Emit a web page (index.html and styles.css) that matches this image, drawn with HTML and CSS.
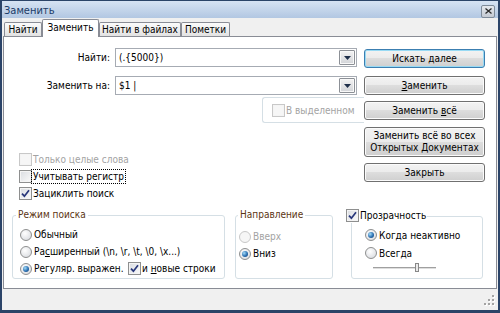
FILE: index.html
```html
<!DOCTYPE html>
<html lang="ru">
<head>
<meta charset="utf-8">
<title>Заменить</title>
<link rel="stylesheet" href="styles.css">
</head>
<body>
<div class="window">
  <div class="titlebar">
    <span class="title">Заменить</span>
    <span class="close"><svg width="7" height="6" viewBox="0 0 7 6"><path d="M0.5 0.5L6.5 5.5M6.5 0.5L0.5 5.5" stroke="#2a2a2a" stroke-width="1.3"/></svg></span>
  </div>
  <div class="body">
    <div class="tabs">
      <div class="tab t-find">Найти</div>
      <div class="tab t-replace active">Заменить</div>
      <div class="tab t-files">Найти в файлах</div>
      <div class="tab t-marks">Пометки</div>
    </div>
    <div class="panel">
      <div class="top">
        <div class="left">
          <div class="field">
            <span class="label">Найти:</span>
            <div class="combo"><span class="value">(.{5000})</span><span class="drop"><svg width="7" height="4" viewBox="0 0 7 4"><path d="M0 0H7L3.5 4Z" fill="#1f2f4a"/></svg></span></div>
          </div>
          <div class="field">
            <span class="label">Заменить на:</span>
            <div class="combo"><span class="value">$1 |</span><span class="drop"><svg width="7" height="4" viewBox="0 0 7 4"><path d="M0 0H7L3.5 4Z" fill="#1f2f4a"/></svg></span></div>
          </div>
          <div class="selbox">
            <div class="chk disabled"><span class="cb"></span><span class="txt">В выделенном</span></div>
          </div>
          <div class="checks">
            <div class="chk disabled"><span class="cb"></span><span class="txt">Только целые слова</span></div>
            <div class="chk"><span class="cb"></span><span class="txt focus">Учитывать регистр</span></div>
            <div class="chk"><span class="cb"><svg width="9" height="9" viewBox="0 0 9 9"><path d="M1 4.6L3.4 7.2L8 1.2" fill="none" stroke="#27367a" stroke-width="1.7"/></svg></span><span class="txt">Зациклить поиск</span></div>
          </div>
        </div>
        <div class="buttons">
          <div class="btn default">Искать далее</div>
          <div class="btn b2"><span><u>З</u>аменить</span></div>
          <div class="btn b3"><span>Заменить <u>в</u>сё</span></div>
          <div class="btn b4 tall"><span>Заменить всё во всех<br>Открытых Документах</span></div>
          <div class="btn b5">Закрыть</div>
        </div>
      </div>
      <div class="groups">
        <fieldset class="group g-mode">
          <legend>Режим поиска</legend>
          <div class="gbody">
            <div class="opt"><span class="rb"></span><span class="txt">Обычный</span></div>
            <div class="opt"><span class="rb"></span><span class="txt">Ра<u>с</u>ширенный (\n, \r, \t, \0, \x...)</span></div>
            <div class="opt">
              <span class="opt-main"><span class="rb on"></span><span class="txt">Регуляр. выражен.</span></span>
              <span class="cb"><svg width="9" height="9" viewBox="0 0 9 9"><path d="M1 4.6L3.4 7.2L8 1.2" fill="none" stroke="#27367a" stroke-width="1.7"/></svg></span><span class="txt">и <u>н</u>овые строки</span>
            </div>
          </div>
        </fieldset>
        <fieldset class="group g-dir">
          <legend>Направление</legend>
          <div class="gbody">
            <div class="opt disabled"><span class="rb"></span><span class="txt">Вверх</span></div>
            <div class="opt"><span class="rb on"></span><span class="txt">Вниз</span></div>
          </div>
        </fieldset>
        <fieldset class="group g-trans">
          <legend><span class="legend-chk"><span class="cb"><svg width="9" height="9" viewBox="0 0 9 9"><path d="M1 4.6L3.4 7.2L8 1.2" fill="none" stroke="#27367a" stroke-width="1.7"/></svg></span><span class="txt">Прозрачность</span></span></legend>
          <div class="gbody">
            <div class="opt"><span class="rb on"></span><span class="txt">Когда неактивно</span></div>
            <div class="opt"><span class="rb"></span><span class="txt">Всегда</span></div>
            <div class="slider"><span class="track"></span><span class="thumb"></span></div>
          </div>
        </fieldset>
      </div>
    </div>
    <div class="footer">
      <svg class="grip" width="11" height="11" viewBox="0 0 11 11">
        <g fill="#ffffff"><rect x="9" y="1" width="2" height="2"/><rect x="9" y="5" width="2" height="2"/><rect x="5" y="5" width="2" height="2"/><rect x="9" y="9" width="2" height="2"/><rect x="5" y="9" width="2" height="2"/><rect x="1" y="9" width="2" height="2"/></g>
        <g fill="#a3a3a3"><rect x="8" y="0" width="2" height="2"/><rect x="8" y="4" width="2" height="2"/><rect x="4" y="4" width="2" height="2"/><rect x="8" y="8" width="2" height="2"/><rect x="4" y="8" width="2" height="2"/><rect x="0" y="8" width="2" height="2"/></g>
      </svg>
    </div>
  </div>
</div>
</body>
</html>
```
FILE: styles.css
```css
* { box-sizing: border-box; }
html, body { margin: 0; padding: 0; }
body {
  width: 500px;
  height: 313px;
  overflow: hidden;
  font-family: "DejaVu Sans Condensed", "DejaVu Sans", sans-serif;
  font-stretch: condensed;
  font-size: 10px;
  color: #000;
  background: #f0f0f0;
}
u { text-decoration: underline; text-underline-offset: 1px; }

.window {
  width: 500px;
  height: 313px;
  border-style: solid;
  border-color: #2b4468;
  border-width: 1px 2px 3px 2px;
  display: flex;
  flex-direction: column;
  background: #f0f0f0;
}
.titlebar {
  height: 17px;
  flex: none;
  display: flex;
  align-items: center;
  justify-content: space-between;
  padding: 0 3px 0 2px;
  background: linear-gradient(#d6e3f3, #b2c7e2);
}
.title { font-size: 11px; color: #1b3a66; margin-top: 2px; }
.close {
  width: 14px;
  height: 13px;
  margin-top: 3px;
  border: 1px solid #7d8a99;
  border-radius: 2px;
  background: linear-gradient(#e4e8ee, #c4cad3);
  display: flex;
  align-items: center;
  justify-content: center;
}

.body {
  flex: 1;
  display: flex;
  flex-direction: column;
  padding: 1px 1px 0 1px;
}
.tabs {
  display: flex;
  align-items: flex-end;
  height: 18px;
  flex: none;
  margin-bottom: -1px;
  padding-left: 1px;
}
.tab {
  height: 14px;
  margin-bottom: 1px;
  border: 1px solid #898c95;
  border-bottom: none;
  border-radius: 2px 2px 0 0;
  background: linear-gradient(#fbfbfb, #e2e2e2);
  text-align: center;
  line-height: 14px;
}
.t-find { width: 38px; }
.t-replace { width: 57px; }
.t-files { width: 82px; }
.t-marks { width: 49px; }
.tab.active {
  height: 18px;
  margin-bottom: 0;
  background: #fff;
  position: relative;
  z-index: 1;
  line-height: 15px;
}

.panel {
  height: 253px;
  flex: none;
  background: #fff;
  border: 1px solid #898c95;
  padding-top: 11px;
  display: flex;
  flex-direction: column;
}
.top { display: flex; }
.left { width: 360px; }
.buttons {
  width: 121px;
  margin-left: auto;
  margin-right: 11px;
  padding-top: 1px;
  display: flex;
  flex-direction: column;
}

.field { display: flex; align-items: center; height: 19px; }
.field + .field { margin-top: 9px; }
.label { width: 106px; text-align: right; margin-right: 5px; }
.combo {
  width: 242px;
  height: 19px;
  border: 1px solid #a6abb3;
  display: flex;
  align-items: center;
  background: #fff;
}
.value { flex: 1; padding-left: 3px; }
.drop {
  width: 16px;
  height: 15px;
  margin-right: 1px;
  border: 1px solid #8c9096;
  border-radius: 1px;
  background: linear-gradient(#f3f3f3, #d2d4d8);
  box-shadow: inset 0 0 0 1px #f8f8f8;
  display: flex;
  align-items: center;
  justify-content: center;
}

.selbox {
  margin: 2px 0 0 258px;
  height: 26px;
  border: 1px solid #d5dfe5;
  border-right: none;
  border-radius: 3px 0 0 3px;
  display: flex;
  align-items: center;
  padding-left: 9px;
}
.checks { margin-top: 28px; padding-left: 15px; }
.chk { display: flex; align-items: center; height: 17px; }
.txt { padding: 0 1px; line-height: 13px; white-space: nowrap; }
.focus { outline: 1px dotted #000; outline-offset: 0; }
.cb {
  width: 13px;
  height: 13px;
  flex: none;
  border: 1px solid #8e8f8f;
  background: linear-gradient(135deg, #d9dce1, #fafafa);
  box-shadow: inset 0 0 0 1px #f4f4f4;
  display: flex;
  align-items: center;
  justify-content: center;
}
.disabled { color: #a3a3a3; }
.disabled .cb, .disabled .rb {
  border-color: #c8c8c8;
  background: #f6f6f6;
}

.btn {
  height: 19px;
  flex: none;
  border: 1px solid #707070;
  border-radius: 3px;
  background: linear-gradient(#f3f3f3 0%, #ebebeb 49%, #dddddd 50%, #cfcfcf 100%);
  box-shadow: inset 0 0 0 1px #fbfbfb;
  display: flex;
  align-items: center;
  justify-content: center;
  text-align: center;
  line-height: 12px;
}
.btn.default { border-color: #3c7fb1; box-shadow: inset 0 0 0 1px #98daf4; }
.b2 { margin-top: 8px; }
.b3 { margin-top: 6px; }
.b4 { margin-top: 7px; }
.b5 { margin-top: 6px; }
.btn.tall { height: 30px; }

.groups { display: flex; margin-top: 7px; padding-left: 8px; }
.group {
  margin: 0;
  padding: 0;
  min-width: 0;
  height: 70px;
  border: 1px solid #d5dfe5;
  border-radius: 3px;
}
.group legend { padding: 0 2px; line-height: 12px; color: #5b3512; }
.g-mode { width: 213px; }
.g-mode legend { margin-left: 3px; }
.g-dir { width: 98px; margin-left: 10px; }
.g-dir legend { margin-left: 2px; }
.g-trans { width: 132px; margin-left: 18px; }
.g-trans legend { margin-left: -6px; padding: 0; color: #000; }
.legend-chk { display: inline-flex; align-items: center; height: 13px; }

.gbody { display: flex; flex-direction: column; }
.g-mode .gbody { padding: 5px 0 0 7px; }
.g-dir .gbody { padding: 7px 0 0 3px; }
.g-trans .gbody { padding: 3px 0 0 13px; }
.opt { display: flex; align-items: center; height: 17px; white-space: nowrap; }
.g-trans .opt { height: 18px; }
.opt-main { display: flex; align-items: center; width: 108px; }
.rb {
  width: 12px;
  height: 12px;
  flex: none;
  border-radius: 50%;
  border: 1px solid #8e8f8f;
  background: radial-gradient(circle at 40% 35%, #ffffff, #d3d6db);
  margin-right: 1px;
  display: flex;
  align-items: center;
  justify-content: center;
}
.rb.on::after {
  content: "";
  width: 6px;
  height: 6px;
  border-radius: 50%;
  background: radial-gradient(circle at 35% 35%, #a4dcf8, #2b70b2 55%, #10396a);
}

.slider {
  position: relative;
  width: 63px;
  height: 12px;
  margin-left: 8px;
  display: flex;
  align-items: center;
}
.track {
  width: 100%;
  height: 3px;
  border-top: 1px solid #a0a0a0;
  border-bottom: 1px solid #ffffff;
  background: #dedede;
}
.thumb {
  position: absolute;
  left: 42px;
  top: 1px;
  width: 4px;
  height: 9px;
  border: 1px solid #888;
  background: #eaeaea;
}

.footer {
  flex: 1;
  display: flex;
  justify-content: flex-end;
  align-items: flex-end;
}
.grip { margin: 0 2px 4px 0; }
```
